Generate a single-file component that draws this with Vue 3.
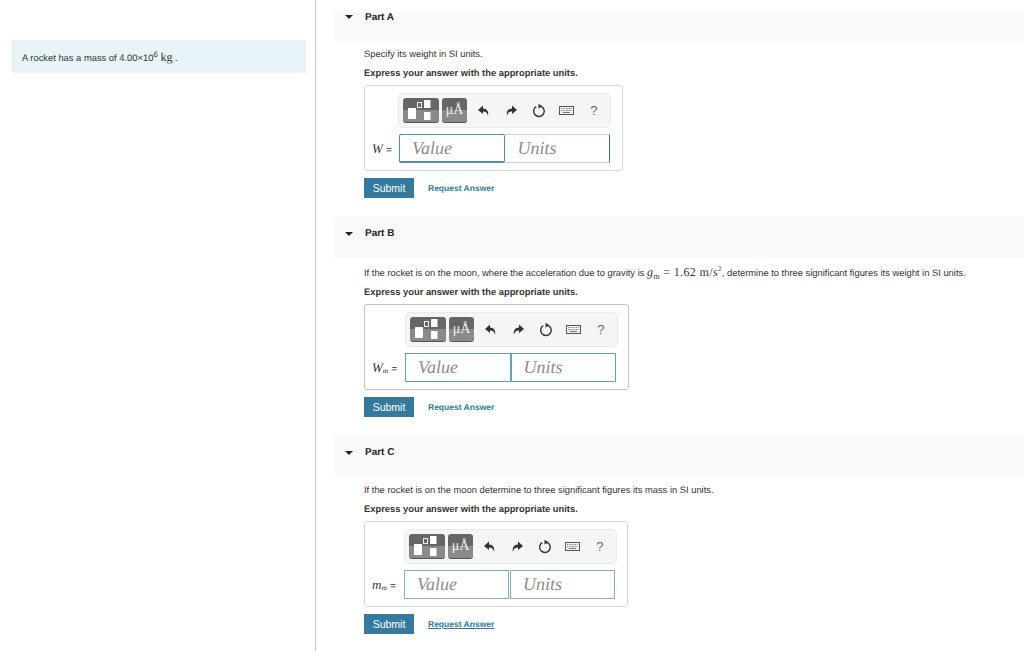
<script setup>
const parts = [
  { id: 'a', title: 'Part A', label: 'W', sub: '', text: 'Specify its weight in SI units.' },
  { id: 'b', title: 'Part B', label: 'W', sub: 'm', text: '' },
  { id: 'c', title: 'Part C', label: 'm', sub: 'm', text: 'If the rocket is on the moon determine to three significant figures its mass in SI units.' }
]
</script>

<template>
  <div class="page">
    <!-- Statement -->
    <aside class="left">
      <div class="statement">
        A rocket has a mass of 4.00×10<sup>6</sup> <span class="math-roman">kg</span> .
      </div>
    </aside>

    <!-- Parts -->
    <main class="right">
      <section v-for="part in parts" :key="part.id" class="part" :class="'part-' + part.id">
        <header class="part-head">
          <span class="caret"></span>
          <span class="part-title">{{ part.title }}</span>
        </header>

        <div class="part-body">
          <p class="prompt">
            <template v-if="part.id === 'b'">
              If the rocket is on the moon, where the acceleration due to gravity is
              <span class="math"><i>g</i><sub>m</sub> = 1.62 m/s<sup>2</sup></span>, determine to three significant figures its weight in SI units.
            </template>
            <template v-else>{{ part.text }}</template>
          </p>
          <p class="prompt bold">Express your answer with the appropriate units.</p>

          <div class="answer">
            <div class="toolbar">
              <button class="tool-btn templates">
                <svg width="36" height="25" viewBox="0 0 36 25">
                  <rect x="5" y="10" width="8" height="11" fill="#fff" />
                  <rect x="14.500" y="4.500" width="4" height="5" fill="none" stroke="#eee" stroke-width="1" />
                  <rect x="21" y="2" width="6.500" height="8" fill="#fff" />
                  <rect x="21" y="14" width="6.500" height="8" fill="#fff" />
                </svg>
              </button>
              <button class="tool-btn symbols"><span>μÅ</span></button>
              <span class="icon">
                <svg width="14" height="14" viewBox="0 0 14 14"><path d="M6 1.500 1 6 6 10V7.500c2.600 0 4.300 1 5 4.500 1-4.500-1-7.300-5-7.500z" fill="#333" /></svg>
              </span>
              <span class="icon">
                <svg width="14" height="14" viewBox="0 0 14 14"><path d="M8 1.500 13 6 8 10V7.500c-2.600 0-4.300 1-5 4.500-1-4.500 1-7.300 5-7.500z" fill="#333" /></svg>
              </span>
              <span class="icon">
                <svg width="14" height="15" viewBox="0 0 14 15"><path d="M9 3.300A5.300 5.300 0 1 1 4.300 3.600" fill="none" stroke="#333" stroke-width="1.400" /><path d="M6.500 .8 10.500 3.200 6.500 5.400z" fill="#333" /></svg>
              </span>
              <span class="icon">
                <svg width="15" height="9" viewBox="0 0 15 9">
                  <rect x=".5" y=".5" width="14" height="8" fill="#f4f4f4" stroke="#555" />
                  <path d="M2 2.500h11M2 4.500h11" stroke="#888" stroke-dasharray="1 .6" />
                  <path d="M4 6.500h7" stroke="#777" />
                </svg>
              </span>
              <span class="icon help">?</span>
            </div>

            <div class="eq-label"><i>{{ part.label }}</i><sub v-if="part.sub">{{ part.sub }}</sub> <span class="equals">=</span></div>
            <div class="inputs">
              <div class="field value">Value</div>
              <div class="field units">Units</div>
            </div>
          </div>

          <div class="actions">
            <button class="submit">Submit</button>
            <a class="request">Request Answer</a>
          </div>
        </div>
      </section>
    </main>
  </div>
</template>

<style>
html, body {
  margin: 0;
  background: #fff;
}
</style>

<style scoped>
.page {
  display: flex;
  height: 651px;
  overflow: hidden;
  font-family: "Liberation Sans", Arial, sans-serif;
  font-size: 9.370px;
  color: #333;
  text-rendering: geometricPrecision;
}

.left {
  box-sizing: border-box;
  width: 316px;
  flex: none;
  padding: 40px 9px 0 12px;
  border-right: 1px solid #c7cacf;
}

.statement {
  height: 33px;
  line-height: 35px;
  padding-left: 10px;
  background: #e8f4f7;
  white-space: nowrap;
}

.statement sup {
  font-size: 8px;
  line-height: 0;
  vertical-align: 4px;
}

.math-roman {
  font-family: "Liberation Serif", serif;
  font-size: 12px;
}

.right {
  flex: 1;
  padding: 12px 0 0 19px;
}

.part {
  margin-bottom: 19px;
}

.part-head {
  display: flex;
  align-items: flex-start;
  height: 41px;
  padding-top: 10px;
  box-sizing: border-box;
  background: #f9f9f9;
}

.part-a .part-head {
  height: 29px;
  padding-top: 0;
}

.caret {
  flex: none;
  width: 0;
  height: 0;
  margin: 5px 0 0 10px;
  border-left: 4.500px solid transparent;
  border-right: 4.500px solid transparent;
  border-top: 4px solid #222;
}

.part-a .caret {
  margin-top: 3px;
}

.part-title {
  margin-left: 12px;
  line-height: 14px;
  font-weight: 700;
  font-size: 10px;
  color: #222;
}

.part-a .part-title {
  margin-top: -1px;
}

.part-body {
  padding: 5px 0 0 29px;
}

.part-b .part-body {
  padding-top: 7px;
}

.prompt {
  margin: 0 0 5px;
  height: 14px;
  line-height: 17px;
  white-space: nowrap;
}

.prompt.bold {
  margin-bottom: 6px;
  font-weight: 700;
}

.math {
  font-family: "Liberation Serif", serif;
  font-size: 12px;
  line-height: 0;
  letter-spacing: .35px;
}

.math sub {
  font-size: 8px;
  line-height: 0;
}

.math sup {
  font-size: 7px;
  line-height: 0;
}

.answer {
  box-sizing: border-box;
  display: grid;
  grid-template-columns: 26px 1fr;
  grid-template-rows: 35px 29px;
  row-gap: 6px;
  align-items: center;
  width: 259px;
  height: 86px;
  padding: 7px 0 0 7px;
  border: 1px solid #d5d5d5;
  border-radius: 3px;
}

.part-b .answer {
  grid-template-columns: 33px 1fr;
  width: 265px;
  border-color: #c4c4c4;
}

.part-c .answer {
  grid-template-columns: 32px 1fr;
  width: 264px;
}

.toolbar {
  grid-column: 2;
  box-sizing: border-box;
  display: flex;
  align-items: center;
  width: 213px;
  height: 35px;
  padding-left: 4px;
  background: #f5f5f5;
  border: 1px solid #eaeaea;
  border-radius: 5px;
}

.tool-btn {
  box-sizing: border-box;
  height: 25px;
  padding: 0;
  border: none;
  border-radius: 3px;
  background: linear-gradient(#666 0 50%, #8a8a8a 50% 100%);
  border-bottom: 1px solid #555;
}

.templates {
  width: 36px;
}

.templates svg {
  display: block;
}

.symbols {
  width: 25px;
  margin-left: 3px;
  color: #f2f2f2;
  font-family: "Liberation Serif", serif;
  font-size: 14px;
  line-height: 24px;
}

.icon {
  display: flex;
  justify-content: center;
  align-items: center;
  flex: none;
  width: 27.500px;
}

.symbols + .icon {
  margin-left: 3px;
}

.help {
  font-size: 13px;
  color: #666;
}

.eq-label {
  grid-column: 1;
  font-family: "Liberation Serif", serif;
  font-size: 13px;
  color: #333;
  white-space: nowrap;
}

.eq-label sub {
  font-size: 7px;
  line-height: 0;
  vertical-align: -1px;
}

.equals {
  font-family: "Liberation Sans", sans-serif;
  font-size: 10px;
}

.inputs {
  display: flex;
  height: 29px;
}

.part-a .inputs {
  margin-left: 1px;
}

.part-c .inputs {
  gap: 1px;
}

.field {
  box-sizing: border-box;
  width: 105.500px;
  padding-left: 12px;
  border: 1px solid #5ea3bf;
  font-family: "Liberation Serif", serif;
  font-style: italic;
  font-size: 18px;
  line-height: 26px;
  color: #8c8c8c;
}

.part-c .field {
  width: 105px;
  border-color: #7fb0c4;
}

.part-a .value {
  border: 1px solid #4b91b0;
  border-bottom-width: 2px;
  border-radius: 2px;
}

.part-a .units {
  padding-left: 13px;
  border-color: #b9d6e1;
  border-left: none;
  border-right: 1px solid #2f7596;
}

.actions {
  display: flex;
  align-items: center;
  margin-top: 7px;
  height: 20px;
}

.submit {
  width: 50px;
  height: 20px;
  padding: 0;
  border: none;
  background: #337a9e;
  color: #fff;
  font-family: "Liberation Sans", Arial, sans-serif;
  font-size: 10.500px;
}

.request {
  margin-left: 14px;
  color: #2a7a9f;
  font-weight: 700;
  font-size: 8.500px;
}

.part-c .request {
  text-decoration: underline;
}
</style>
